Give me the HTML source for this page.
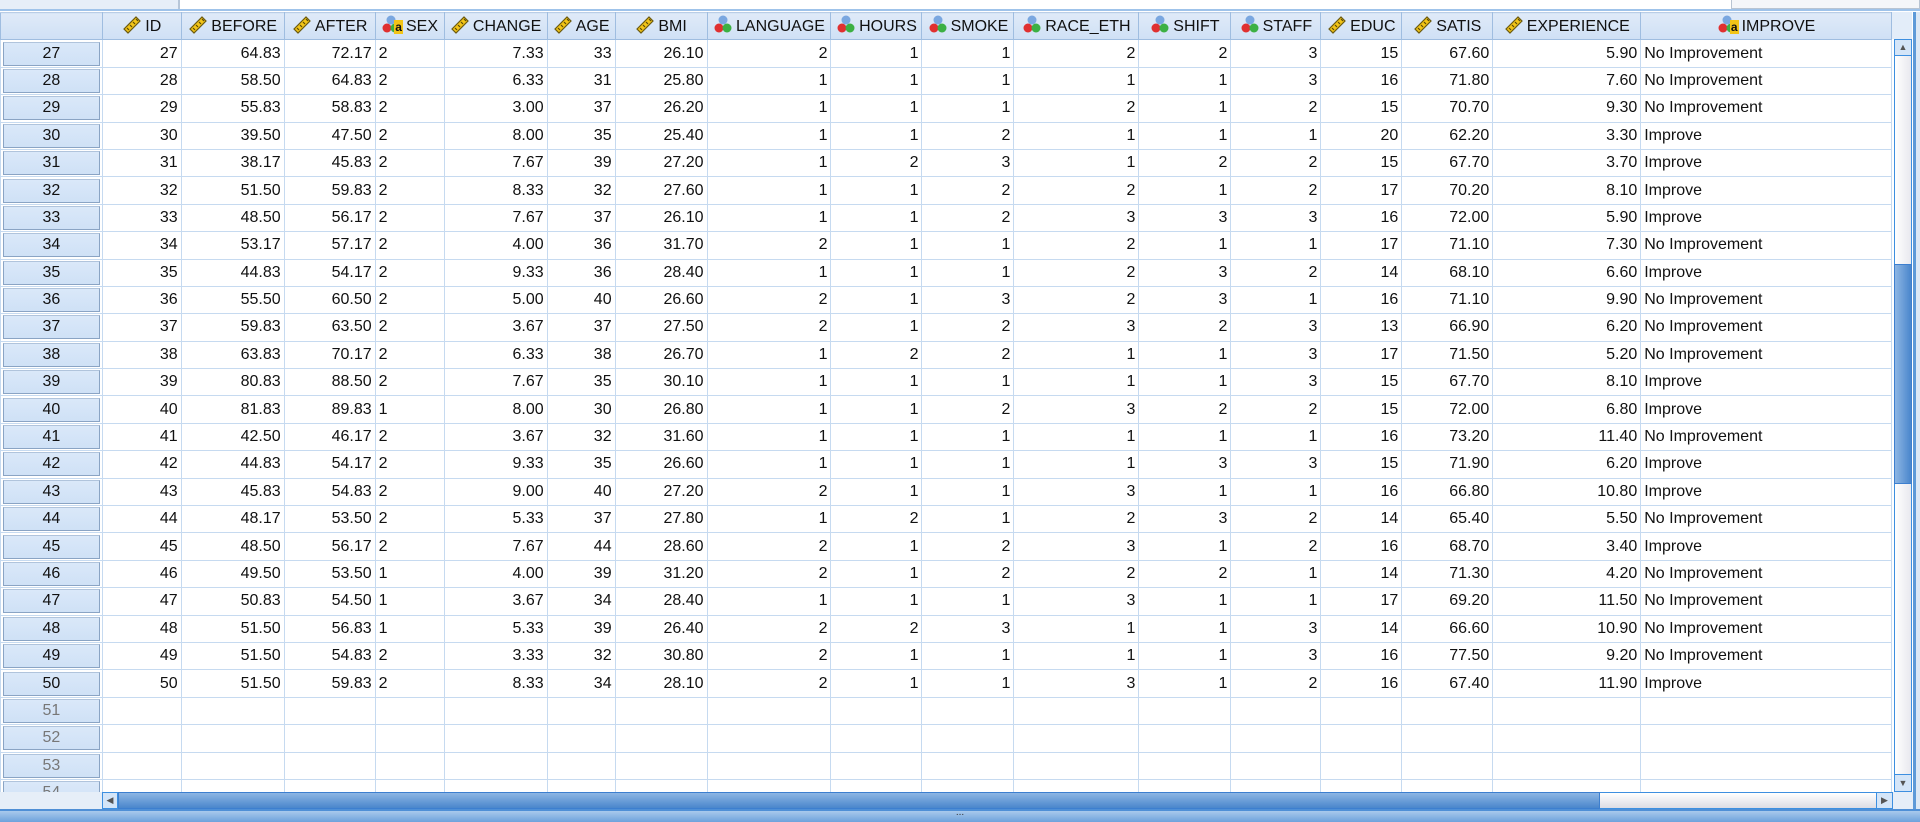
<!DOCTYPE html>
<html><head><meta charset="utf-8"><style>
*{margin:0;padding:0;box-sizing:border-box}
body{width:1920px;height:822px;overflow:hidden;background:#fff;font-family:"Liberation Sans",Arial,sans-serif;position:relative}
#top{position:absolute;left:0;top:0;width:1920px;height:11px;background:#fff;border-bottom:2px solid #9fc3ea}
#top .box{position:absolute;left:0;top:0;width:180px;height:9px;background:#e6eef8;border-right:2px solid #b7c6d8}
#top .vis{position:absolute;left:1731px;top:-9px;width:189px;height:18px;border:1px solid #b8c4d2;background:#f4f6f9}
#grid{position:absolute;left:0;top:12px;width:1892px;height:780px;overflow:hidden;background:#fff}
table{border-collapse:collapse;table-layout:fixed;font-size:16px;color:#111}
tr{height:27.4px}
td,th{height:27.4px;border:1px solid #c6daf0;white-space:nowrap;overflow:hidden;padding:0 3px;line-height:24px}
th{background:linear-gradient(#dfeaf8,#cfe0f5);font-weight:normal;text-align:center;border:1px solid #9fbde0;border-top:1px solid #b9cde6}
td{text-align:right}
td.l{text-align:left}
td.rh{background:#fff;padding:1px 2px;text-align:center;border-color:#c6daf0}
td.rh div{background:linear-gradient(#dae8f9,#cfe1f6);border:1px solid #8aa4c4;border-top-color:#b0c4dc;height:24px;line-height:22px}
td.rh.g div{color:#777}
th svg{vertical-align:-3px;margin-right:3px}
.bar{position:absolute}
</style></head><body>
<svg width="0" height="0" style="position:absolute">
<defs>
<symbol id="r" viewBox="0 0 20 20"><path d="M2 15 L14 3 L18 7 L6 19 Z" fill="#f2c417" stroke="#6b5a10" stroke-width="1.2"/><path d="M5 14l2 2M8 11l2 2M11 8l2 2M14 5l2 2" stroke="#5a4a0a" stroke-width="1.2"/></symbol>
<symbol id="n" viewBox="0 0 20 20"><circle cx="10" cy="6" r="4.5" fill="#7aa7e0"/><circle cx="6" cy="14" r="4.5" fill="#e03030"/><circle cx="14" cy="14" r="4.5" fill="#3cb043"/></symbol>
</defs></svg>
<div id="top"><div class="box"></div><div class="vis"></div></div>
<div id="grid"><table>
<colgroup><col style="width:102px"><col style="width:79px"><col style="width:103px"><col style="width:91px"><col style="width:69px"><col style="width:103px"><col style="width:68px"><col style="width:92px"><col style="width:124px"><col style="width:91px"><col style="width:92px"><col style="width:125px"><col style="width:92px"><col style="width:90px"><col style="width:81px"><col style="width:91px"><col style="width:148px"><col style="width:251px"></colgroup>
<tr><th></th><th><svg width="20" height="20"><use href="#r"/></svg>ID</th><th><svg width="20" height="20"><use href="#r"/></svg>BEFORE</th><th><svg width="20" height="20"><use href="#r"/></svg>AFTER</th><th><svg width="20" height="20"><use href="#n"/></svg><span style="background:#f2c417;font-weight:bold;font-size:12px;margin-left:-10px;margin-right:3px;padding:0 1px">a</span>SEX</th><th><svg width="20" height="20"><use href="#r"/></svg>CHANGE</th><th><svg width="20" height="20"><use href="#r"/></svg>AGE</th><th><svg width="20" height="20"><use href="#r"/></svg>BMI</th><th><svg width="20" height="20"><use href="#n"/></svg>LANGUAGE</th><th><svg width="20" height="20"><use href="#n"/></svg>HOURS</th><th><svg width="20" height="20"><use href="#n"/></svg>SMOKE</th><th><svg width="20" height="20"><use href="#n"/></svg>RACE_ETH</th><th><svg width="20" height="20"><use href="#n"/></svg>SHIFT</th><th><svg width="20" height="20"><use href="#n"/></svg>STAFF</th><th><svg width="20" height="20"><use href="#r"/></svg>EDUC</th><th><svg width="20" height="20"><use href="#r"/></svg>SATIS</th><th><svg width="20" height="20"><use href="#r"/></svg>EXPERIENCE</th><th><svg width="20" height="20"><use href="#n"/></svg><span style="background:#f2c417;font-weight:bold;font-size:12px;margin-left:-10px;margin-right:3px;padding:0 1px">a</span>IMPROVE</th></tr>
<tr><td class="rh"><div>27</div></td><td>27</td><td>64.83</td><td>72.17</td><td class="l">2</td><td>7.33</td><td>33</td><td>26.10</td><td>2</td><td>1</td><td>1</td><td>2</td><td>2</td><td>3</td><td>15</td><td>67.60</td><td>5.90</td><td class="l">No Improvement</td></tr>
<tr><td class="rh"><div>28</div></td><td>28</td><td>58.50</td><td>64.83</td><td class="l">2</td><td>6.33</td><td>31</td><td>25.80</td><td>1</td><td>1</td><td>1</td><td>1</td><td>1</td><td>3</td><td>16</td><td>71.80</td><td>7.60</td><td class="l">No Improvement</td></tr>
<tr><td class="rh"><div>29</div></td><td>29</td><td>55.83</td><td>58.83</td><td class="l">2</td><td>3.00</td><td>37</td><td>26.20</td><td>1</td><td>1</td><td>1</td><td>2</td><td>1</td><td>2</td><td>15</td><td>70.70</td><td>9.30</td><td class="l">No Improvement</td></tr>
<tr><td class="rh"><div>30</div></td><td>30</td><td>39.50</td><td>47.50</td><td class="l">2</td><td>8.00</td><td>35</td><td>25.40</td><td>1</td><td>1</td><td>2</td><td>1</td><td>1</td><td>1</td><td>20</td><td>62.20</td><td>3.30</td><td class="l">Improve</td></tr>
<tr><td class="rh"><div>31</div></td><td>31</td><td>38.17</td><td>45.83</td><td class="l">2</td><td>7.67</td><td>39</td><td>27.20</td><td>1</td><td>2</td><td>3</td><td>1</td><td>2</td><td>2</td><td>15</td><td>67.70</td><td>3.70</td><td class="l">Improve</td></tr>
<tr><td class="rh"><div>32</div></td><td>32</td><td>51.50</td><td>59.83</td><td class="l">2</td><td>8.33</td><td>32</td><td>27.60</td><td>1</td><td>1</td><td>2</td><td>2</td><td>1</td><td>2</td><td>17</td><td>70.20</td><td>8.10</td><td class="l">Improve</td></tr>
<tr><td class="rh"><div>33</div></td><td>33</td><td>48.50</td><td>56.17</td><td class="l">2</td><td>7.67</td><td>37</td><td>26.10</td><td>1</td><td>1</td><td>2</td><td>3</td><td>3</td><td>3</td><td>16</td><td>72.00</td><td>5.90</td><td class="l">Improve</td></tr>
<tr><td class="rh"><div>34</div></td><td>34</td><td>53.17</td><td>57.17</td><td class="l">2</td><td>4.00</td><td>36</td><td>31.70</td><td>2</td><td>1</td><td>1</td><td>2</td><td>1</td><td>1</td><td>17</td><td>71.10</td><td>7.30</td><td class="l">No Improvement</td></tr>
<tr><td class="rh"><div>35</div></td><td>35</td><td>44.83</td><td>54.17</td><td class="l">2</td><td>9.33</td><td>36</td><td>28.40</td><td>1</td><td>1</td><td>1</td><td>2</td><td>3</td><td>2</td><td>14</td><td>68.10</td><td>6.60</td><td class="l">Improve</td></tr>
<tr><td class="rh"><div>36</div></td><td>36</td><td>55.50</td><td>60.50</td><td class="l">2</td><td>5.00</td><td>40</td><td>26.60</td><td>2</td><td>1</td><td>3</td><td>2</td><td>3</td><td>1</td><td>16</td><td>71.10</td><td>9.90</td><td class="l">No Improvement</td></tr>
<tr><td class="rh"><div>37</div></td><td>37</td><td>59.83</td><td>63.50</td><td class="l">2</td><td>3.67</td><td>37</td><td>27.50</td><td>2</td><td>1</td><td>2</td><td>3</td><td>2</td><td>3</td><td>13</td><td>66.90</td><td>6.20</td><td class="l">No Improvement</td></tr>
<tr><td class="rh"><div>38</div></td><td>38</td><td>63.83</td><td>70.17</td><td class="l">2</td><td>6.33</td><td>38</td><td>26.70</td><td>1</td><td>2</td><td>2</td><td>1</td><td>1</td><td>3</td><td>17</td><td>71.50</td><td>5.20</td><td class="l">No Improvement</td></tr>
<tr><td class="rh"><div>39</div></td><td>39</td><td>80.83</td><td>88.50</td><td class="l">2</td><td>7.67</td><td>35</td><td>30.10</td><td>1</td><td>1</td><td>1</td><td>1</td><td>1</td><td>3</td><td>15</td><td>67.70</td><td>8.10</td><td class="l">Improve</td></tr>
<tr><td class="rh"><div>40</div></td><td>40</td><td>81.83</td><td>89.83</td><td class="l">1</td><td>8.00</td><td>30</td><td>26.80</td><td>1</td><td>1</td><td>2</td><td>3</td><td>2</td><td>2</td><td>15</td><td>72.00</td><td>6.80</td><td class="l">Improve</td></tr>
<tr><td class="rh"><div>41</div></td><td>41</td><td>42.50</td><td>46.17</td><td class="l">2</td><td>3.67</td><td>32</td><td>31.60</td><td>1</td><td>1</td><td>1</td><td>1</td><td>1</td><td>1</td><td>16</td><td>73.20</td><td>11.40</td><td class="l">No Improvement</td></tr>
<tr><td class="rh"><div>42</div></td><td>42</td><td>44.83</td><td>54.17</td><td class="l">2</td><td>9.33</td><td>35</td><td>26.60</td><td>1</td><td>1</td><td>1</td><td>1</td><td>3</td><td>3</td><td>15</td><td>71.90</td><td>6.20</td><td class="l">Improve</td></tr>
<tr><td class="rh"><div>43</div></td><td>43</td><td>45.83</td><td>54.83</td><td class="l">2</td><td>9.00</td><td>40</td><td>27.20</td><td>2</td><td>1</td><td>1</td><td>3</td><td>1</td><td>1</td><td>16</td><td>66.80</td><td>10.80</td><td class="l">Improve</td></tr>
<tr><td class="rh"><div>44</div></td><td>44</td><td>48.17</td><td>53.50</td><td class="l">2</td><td>5.33</td><td>37</td><td>27.80</td><td>1</td><td>2</td><td>1</td><td>2</td><td>3</td><td>2</td><td>14</td><td>65.40</td><td>5.50</td><td class="l">No Improvement</td></tr>
<tr><td class="rh"><div>45</div></td><td>45</td><td>48.50</td><td>56.17</td><td class="l">2</td><td>7.67</td><td>44</td><td>28.60</td><td>2</td><td>1</td><td>2</td><td>3</td><td>1</td><td>2</td><td>16</td><td>68.70</td><td>3.40</td><td class="l">Improve</td></tr>
<tr><td class="rh"><div>46</div></td><td>46</td><td>49.50</td><td>53.50</td><td class="l">1</td><td>4.00</td><td>39</td><td>31.20</td><td>2</td><td>1</td><td>2</td><td>2</td><td>2</td><td>1</td><td>14</td><td>71.30</td><td>4.20</td><td class="l">No Improvement</td></tr>
<tr><td class="rh"><div>47</div></td><td>47</td><td>50.83</td><td>54.50</td><td class="l">1</td><td>3.67</td><td>34</td><td>28.40</td><td>1</td><td>1</td><td>1</td><td>3</td><td>1</td><td>1</td><td>17</td><td>69.20</td><td>11.50</td><td class="l">No Improvement</td></tr>
<tr><td class="rh"><div>48</div></td><td>48</td><td>51.50</td><td>56.83</td><td class="l">1</td><td>5.33</td><td>39</td><td>26.40</td><td>2</td><td>2</td><td>3</td><td>1</td><td>1</td><td>3</td><td>14</td><td>66.60</td><td>10.90</td><td class="l">No Improvement</td></tr>
<tr><td class="rh"><div>49</div></td><td>49</td><td>51.50</td><td>54.83</td><td class="l">2</td><td>3.33</td><td>32</td><td>30.80</td><td>2</td><td>1</td><td>1</td><td>1</td><td>1</td><td>3</td><td>16</td><td>77.50</td><td>9.20</td><td class="l">No Improvement</td></tr>
<tr><td class="rh"><div>50</div></td><td>50</td><td>51.50</td><td>59.83</td><td class="l">2</td><td>8.33</td><td>34</td><td>28.10</td><td>2</td><td>1</td><td>1</td><td>3</td><td>1</td><td>2</td><td>16</td><td>67.40</td><td>11.90</td><td class="l">Improve</td></tr>
<tr><td class="rh g"><div>51</div></td><td></td><td></td><td></td><td></td><td></td><td></td><td></td><td></td><td></td><td></td><td></td><td></td><td></td><td></td><td></td><td></td><td></td></tr>
<tr><td class="rh g"><div>52</div></td><td></td><td></td><td></td><td></td><td></td><td></td><td></td><td></td><td></td><td></td><td></td><td></td><td></td><td></td><td></td><td></td><td></td></tr>
<tr><td class="rh g"><div>53</div></td><td></td><td></td><td></td><td></td><td></td><td></td><td></td><td></td><td></td><td></td><td></td><td></td><td></td><td></td><td></td><td></td><td></td></tr>
<tr><td class="rh g"><div>54</div></td><td></td><td></td><td></td><td></td><td></td><td></td><td></td><td></td><td></td><td></td><td></td><td></td><td></td><td></td><td></td><td></td><td></td></tr>
</table></div>
<div class="bar" style="left:1892px;top:12px;width:28px;height:780px;background:#fff"></div>
<div class="bar" style="left:1892px;top:12px;width:20px;height:27px;background:#e3edf9"></div>
<div class="bar" style="left:1894px;top:39px;width:18px;height:753px;background:linear-gradient(90deg,#fff,#e8e8ee);border:1px solid #3d8fe0"></div>
<div class="bar" style="left:1894px;top:39px;width:18px;height:17px;background:#d4e5f8;border:1px solid #3d8fe0;font-size:9px;color:#555;text-align:center;line-height:15px">&#9650;</div>
<div class="bar" style="left:1894px;top:264px;width:18px;height:220px;background:linear-gradient(90deg,#8db6e4,#4a86cc);border:1px solid #3d7fcf"></div>
<div class="bar" style="left:1894px;top:774px;width:18px;height:18px;background:#d4e5f8;border:1px solid #3d8fe0;font-size:9px;color:#555;text-align:center;line-height:16px">&#9660;</div>
<div class="bar" style="left:1913px;top:12px;width:3px;height:797px;background:#5e9ad8"></div>
<div class="bar" style="left:1916px;top:12px;width:4px;height:797px;background:#dce8f5"></div>
<div class="bar" style="left:0;top:792px;width:102px;height:17px;background:#e6eef8"></div>
<div class="bar" style="left:102px;top:792px;width:1791px;height:17px;background:linear-gradient(#fff,#dcdce4);border:1px solid #3d8fe0"></div>
<div class="bar" style="left:102px;top:792px;width:16px;height:17px;background:#d4e5f8;border:1px solid #3d8fe0;font-size:9px;color:#555;line-height:15px;text-align:center">&#9664;</div>
<div class="bar" style="left:118px;top:792px;width:1482px;height:17px;background:linear-gradient(#8db6e4,#4a86cc);border:1px solid #3d7fcf"></div>
<div class="bar" style="left:1876px;top:792px;width:17px;height:17px;background:#d4e5f8;border:1px solid #3d8fe0;font-size:9px;color:#555;line-height:15px;text-align:center">&#9654;</div>
<div class="bar" style="left:1893px;top:792px;width:20px;height:17px;background:#e6eef8"></div>
<div class="bar" style="left:0;top:809px;width:1920px;height:13px;background:linear-gradient(#a9c9ec,#6ea2dc);border-top:2px solid #4f8fd6"></div>
<div class="bar" style="left:952px;top:811px;width:16px;height:6px;color:#333;font-size:10px;line-height:4px;text-align:center">...</div>
</body></html>
